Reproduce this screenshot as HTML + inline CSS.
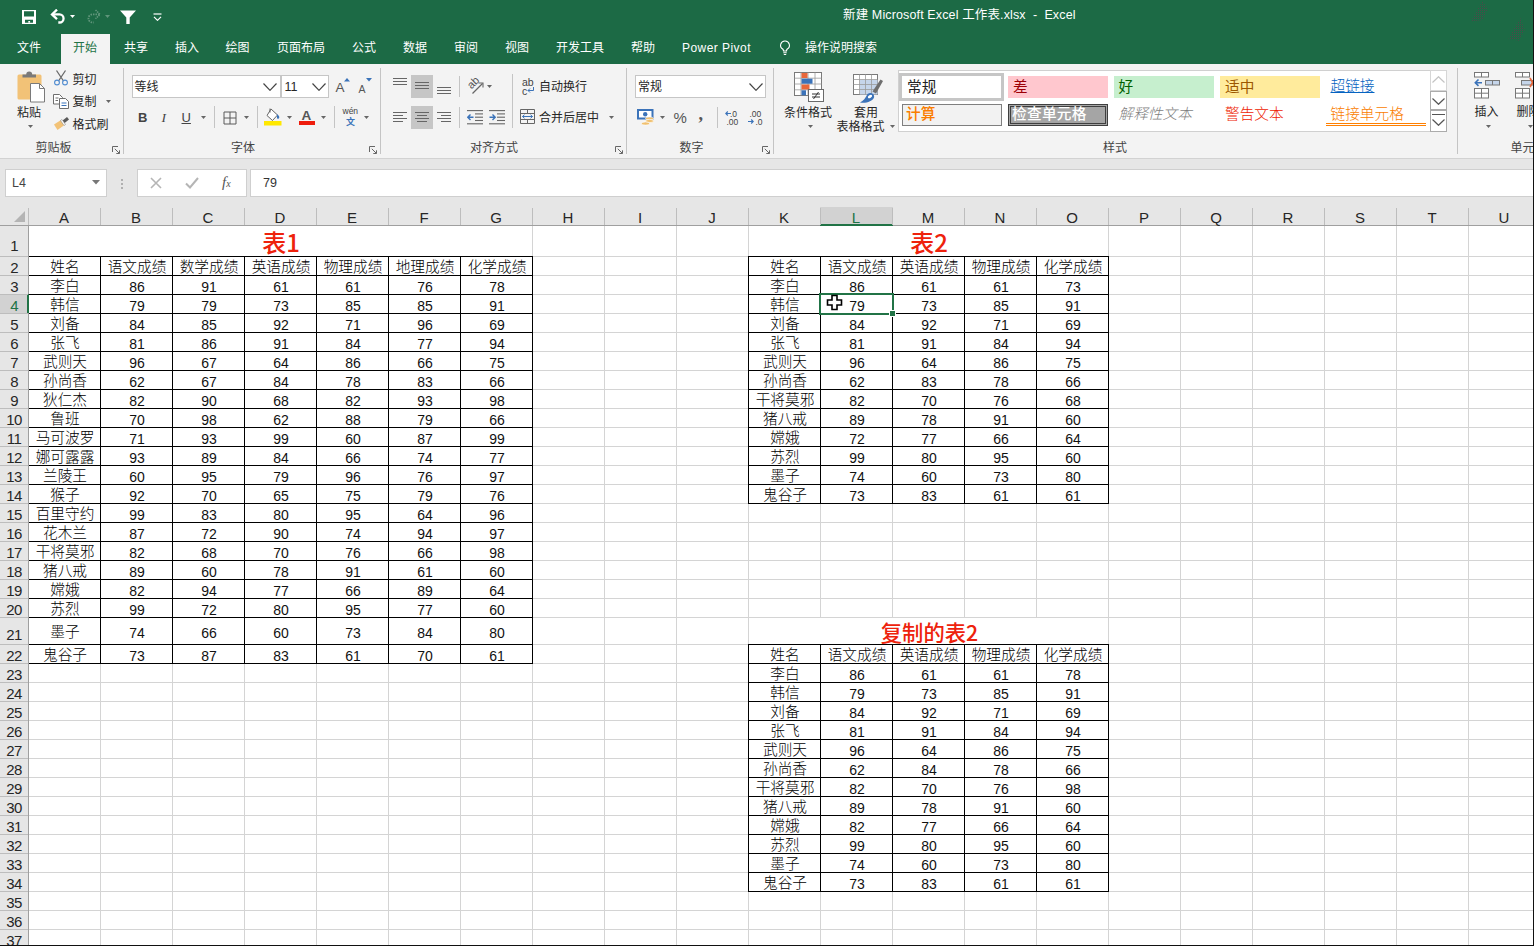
<!DOCTYPE html><html lang="zh-CN"><head><meta charset="utf-8"><title>Excel</title><style>
html,body{margin:0;padding:0;}
body{width:1534px;height:946px;overflow:hidden;background:#fff;position:relative;
 font-family:"Liberation Sans","Noto Sans CJK SC",sans-serif;color:#262626;}
div,span,svg{position:absolute;box-sizing:border-box;}
.t{white-space:nowrap;}
#top{left:0;top:0;width:1534px;height:64px;background:#1c6a45;}
#rib{left:0;top:64px;width:1534px;height:95px;background:#f3f3f3;border-bottom:1px solid #d2d2d2;}
#fb{left:0;top:159px;width:1534px;height:48px;background:#e6e6e6;}
#ch{left:0;top:207px;width:1534px;height:19px;background:#e6e6e6;border-bottom:1px solid #9f9f9f;}
#rh{left:0;top:226px;width:29px;height:720px;background:#e6e6e6;border-right:1px solid #9f9f9f;}
.tab{top:39px;height:18px;line-height:18px;font-size:12px;color:#fff;white-space:nowrap;}
.cl{top:210px;height:16px;line-height:16px;font-size:15px;text-align:center;width:72px;color:#262626;}
.rn{left:0;width:28px;text-align:center;font-size:15px;letter-spacing:-0.6px;color:#262626;height:16px;line-height:16px;}
.hl{left:28px;height:1px;background:#d4d4d4;width:1506px;}
.vl{top:226px;width:1px;background:#d4d4d4;height:720px;}
.bh{height:1px;background:#000;}
.bv{width:1px;background:#000;}
.c{width:72px;height:19px;line-height:19px;text-align:center;font-size:14.67px;white-space:nowrap;color:#000;font-weight:300;}
.n{font-size:15.4px;font-weight:400;transform:scaleX(0.91);color:#111;}
.ttl{color:#ee220c;font-weight:500;font-family:'Noto Sans CJK SC',sans-serif;text-align:center;white-space:nowrap;}
.gl{font-size:12px;color:#444;white-space:nowrap;height:16px;line-height:16px;}
.sep{width:1px;background:#c8c8c8;}
</style></head><body>
<div id="grid" style="left:0;top:0;width:1534px;height:946px">
<div class="vl" style="left:100px"></div>
<div class="vl" style="left:172px"></div>
<div class="vl" style="left:244px"></div>
<div class="vl" style="left:316px"></div>
<div class="vl" style="left:388px"></div>
<div class="vl" style="left:460px"></div>
<div class="vl" style="left:532px"></div>
<div class="vl" style="left:604px"></div>
<div class="vl" style="left:676px"></div>
<div class="vl" style="left:748px"></div>
<div class="vl" style="left:820px"></div>
<div class="vl" style="left:892px"></div>
<div class="vl" style="left:964px"></div>
<div class="vl" style="left:1036px"></div>
<div class="vl" style="left:1108px"></div>
<div class="vl" style="left:1180px"></div>
<div class="vl" style="left:1252px"></div>
<div class="vl" style="left:1324px"></div>
<div class="vl" style="left:1396px"></div>
<div class="vl" style="left:1468px"></div>
<div class="hl" style="top:256px"></div>
<div class="hl" style="top:275px"></div>
<div class="hl" style="top:294px"></div>
<div class="hl" style="top:313px"></div>
<div class="hl" style="top:332px"></div>
<div class="hl" style="top:351px"></div>
<div class="hl" style="top:370px"></div>
<div class="hl" style="top:389px"></div>
<div class="hl" style="top:408px"></div>
<div class="hl" style="top:427px"></div>
<div class="hl" style="top:446px"></div>
<div class="hl" style="top:465px"></div>
<div class="hl" style="top:484px"></div>
<div class="hl" style="top:503px"></div>
<div class="hl" style="top:522px"></div>
<div class="hl" style="top:541px"></div>
<div class="hl" style="top:560px"></div>
<div class="hl" style="top:579px"></div>
<div class="hl" style="top:598px"></div>
<div class="hl" style="top:617px"></div>
<div class="hl" style="top:644px"></div>
<div class="hl" style="top:663px"></div>
<div class="hl" style="top:682px"></div>
<div class="hl" style="top:701px"></div>
<div class="hl" style="top:720px"></div>
<div class="hl" style="top:739px"></div>
<div class="hl" style="top:758px"></div>
<div class="hl" style="top:777px"></div>
<div class="hl" style="top:796px"></div>
<div class="hl" style="top:815px"></div>
<div class="hl" style="top:834px"></div>
<div class="hl" style="top:853px"></div>
<div class="hl" style="top:872px"></div>
<div class="hl" style="top:891px"></div>
<div class="hl" style="top:910px"></div>
<div class="hl" style="top:929px"></div>
<div style="left:29px;top:226px;width:503px;height:30px;background:#fff"></div>
<div style="left:749px;top:226px;width:359px;height:30px;background:#fff"></div>
<div style="left:749px;top:618px;width:359px;height:26px;background:#fff"></div>
</div>
<div class="bh" style="left:28px;top:256px;width:505px"></div>
<div class="bh" style="left:28px;top:275px;width:505px"></div>
<div class="bh" style="left:28px;top:294px;width:505px"></div>
<div class="bh" style="left:28px;top:313px;width:505px"></div>
<div class="bh" style="left:28px;top:332px;width:505px"></div>
<div class="bh" style="left:28px;top:351px;width:505px"></div>
<div class="bh" style="left:28px;top:370px;width:505px"></div>
<div class="bh" style="left:28px;top:389px;width:505px"></div>
<div class="bh" style="left:28px;top:408px;width:505px"></div>
<div class="bh" style="left:28px;top:427px;width:505px"></div>
<div class="bh" style="left:28px;top:446px;width:505px"></div>
<div class="bh" style="left:28px;top:465px;width:505px"></div>
<div class="bh" style="left:28px;top:484px;width:505px"></div>
<div class="bh" style="left:28px;top:503px;width:505px"></div>
<div class="bh" style="left:28px;top:522px;width:505px"></div>
<div class="bh" style="left:28px;top:541px;width:505px"></div>
<div class="bh" style="left:28px;top:560px;width:505px"></div>
<div class="bh" style="left:28px;top:579px;width:505px"></div>
<div class="bh" style="left:28px;top:598px;width:505px"></div>
<div class="bh" style="left:28px;top:617px;width:505px"></div>
<div class="bh" style="left:28px;top:644px;width:505px"></div>
<div class="bh" style="left:28px;top:663px;width:505px"></div>
<div class="bv" style="left:28px;top:256px;height:408px"></div>
<div class="bv" style="left:100px;top:256px;height:408px"></div>
<div class="bv" style="left:172px;top:256px;height:408px"></div>
<div class="bv" style="left:244px;top:256px;height:408px"></div>
<div class="bv" style="left:316px;top:256px;height:408px"></div>
<div class="bv" style="left:388px;top:256px;height:408px"></div>
<div class="bv" style="left:460px;top:256px;height:408px"></div>
<div class="bv" style="left:532px;top:256px;height:408px"></div>
<div class="c" style="left:29px;top:258px">姓名</div>
<div class="c" style="left:101px;top:258px">语文成绩</div>
<div class="c" style="left:173px;top:258px">数学成绩</div>
<div class="c" style="left:245px;top:258px">英语成绩</div>
<div class="c" style="left:317px;top:258px">物理成绩</div>
<div class="c" style="left:389px;top:258px">地理成绩</div>
<div class="c" style="left:461px;top:258px">化学成绩</div>
<div class="c" style="left:29px;top:277px">李白</div>
<div class="c n" style="left:101px;top:277px">86</div>
<div class="c n" style="left:173px;top:277px">91</div>
<div class="c n" style="left:245px;top:277px">61</div>
<div class="c n" style="left:317px;top:277px">61</div>
<div class="c n" style="left:389px;top:277px">76</div>
<div class="c n" style="left:461px;top:277px">78</div>
<div class="c" style="left:29px;top:296px">韩信</div>
<div class="c n" style="left:101px;top:296px">79</div>
<div class="c n" style="left:173px;top:296px">79</div>
<div class="c n" style="left:245px;top:296px">73</div>
<div class="c n" style="left:317px;top:296px">85</div>
<div class="c n" style="left:389px;top:296px">85</div>
<div class="c n" style="left:461px;top:296px">91</div>
<div class="c" style="left:29px;top:315px">刘备</div>
<div class="c n" style="left:101px;top:315px">84</div>
<div class="c n" style="left:173px;top:315px">85</div>
<div class="c n" style="left:245px;top:315px">92</div>
<div class="c n" style="left:317px;top:315px">71</div>
<div class="c n" style="left:389px;top:315px">96</div>
<div class="c n" style="left:461px;top:315px">69</div>
<div class="c" style="left:29px;top:334px">张飞</div>
<div class="c n" style="left:101px;top:334px">81</div>
<div class="c n" style="left:173px;top:334px">86</div>
<div class="c n" style="left:245px;top:334px">91</div>
<div class="c n" style="left:317px;top:334px">84</div>
<div class="c n" style="left:389px;top:334px">77</div>
<div class="c n" style="left:461px;top:334px">94</div>
<div class="c" style="left:29px;top:353px">武则天</div>
<div class="c n" style="left:101px;top:353px">96</div>
<div class="c n" style="left:173px;top:353px">67</div>
<div class="c n" style="left:245px;top:353px">64</div>
<div class="c n" style="left:317px;top:353px">86</div>
<div class="c n" style="left:389px;top:353px">66</div>
<div class="c n" style="left:461px;top:353px">75</div>
<div class="c" style="left:29px;top:372px">孙尚香</div>
<div class="c n" style="left:101px;top:372px">62</div>
<div class="c n" style="left:173px;top:372px">67</div>
<div class="c n" style="left:245px;top:372px">84</div>
<div class="c n" style="left:317px;top:372px">78</div>
<div class="c n" style="left:389px;top:372px">83</div>
<div class="c n" style="left:461px;top:372px">66</div>
<div class="c" style="left:29px;top:391px">狄仁杰</div>
<div class="c n" style="left:101px;top:391px">82</div>
<div class="c n" style="left:173px;top:391px">90</div>
<div class="c n" style="left:245px;top:391px">68</div>
<div class="c n" style="left:317px;top:391px">82</div>
<div class="c n" style="left:389px;top:391px">93</div>
<div class="c n" style="left:461px;top:391px">98</div>
<div class="c" style="left:29px;top:410px">鲁班</div>
<div class="c n" style="left:101px;top:410px">70</div>
<div class="c n" style="left:173px;top:410px">98</div>
<div class="c n" style="left:245px;top:410px">62</div>
<div class="c n" style="left:317px;top:410px">88</div>
<div class="c n" style="left:389px;top:410px">79</div>
<div class="c n" style="left:461px;top:410px">66</div>
<div class="c" style="left:29px;top:429px">马可波罗</div>
<div class="c n" style="left:101px;top:429px">71</div>
<div class="c n" style="left:173px;top:429px">93</div>
<div class="c n" style="left:245px;top:429px">99</div>
<div class="c n" style="left:317px;top:429px">60</div>
<div class="c n" style="left:389px;top:429px">87</div>
<div class="c n" style="left:461px;top:429px">99</div>
<div class="c" style="left:29px;top:448px">娜可露露</div>
<div class="c n" style="left:101px;top:448px">93</div>
<div class="c n" style="left:173px;top:448px">89</div>
<div class="c n" style="left:245px;top:448px">84</div>
<div class="c n" style="left:317px;top:448px">66</div>
<div class="c n" style="left:389px;top:448px">74</div>
<div class="c n" style="left:461px;top:448px">77</div>
<div class="c" style="left:29px;top:467px">兰陵王</div>
<div class="c n" style="left:101px;top:467px">60</div>
<div class="c n" style="left:173px;top:467px">95</div>
<div class="c n" style="left:245px;top:467px">79</div>
<div class="c n" style="left:317px;top:467px">96</div>
<div class="c n" style="left:389px;top:467px">76</div>
<div class="c n" style="left:461px;top:467px">97</div>
<div class="c" style="left:29px;top:486px">猴子</div>
<div class="c n" style="left:101px;top:486px">92</div>
<div class="c n" style="left:173px;top:486px">70</div>
<div class="c n" style="left:245px;top:486px">65</div>
<div class="c n" style="left:317px;top:486px">75</div>
<div class="c n" style="left:389px;top:486px">79</div>
<div class="c n" style="left:461px;top:486px">76</div>
<div class="c" style="left:29px;top:505px">百里守约</div>
<div class="c n" style="left:101px;top:505px">99</div>
<div class="c n" style="left:173px;top:505px">83</div>
<div class="c n" style="left:245px;top:505px">80</div>
<div class="c n" style="left:317px;top:505px">95</div>
<div class="c n" style="left:389px;top:505px">64</div>
<div class="c n" style="left:461px;top:505px">96</div>
<div class="c" style="left:29px;top:524px">花木兰</div>
<div class="c n" style="left:101px;top:524px">87</div>
<div class="c n" style="left:173px;top:524px">72</div>
<div class="c n" style="left:245px;top:524px">90</div>
<div class="c n" style="left:317px;top:524px">74</div>
<div class="c n" style="left:389px;top:524px">94</div>
<div class="c n" style="left:461px;top:524px">97</div>
<div class="c" style="left:29px;top:543px">干将莫邪</div>
<div class="c n" style="left:101px;top:543px">82</div>
<div class="c n" style="left:173px;top:543px">68</div>
<div class="c n" style="left:245px;top:543px">70</div>
<div class="c n" style="left:317px;top:543px">76</div>
<div class="c n" style="left:389px;top:543px">66</div>
<div class="c n" style="left:461px;top:543px">98</div>
<div class="c" style="left:29px;top:562px">猪八戒</div>
<div class="c n" style="left:101px;top:562px">89</div>
<div class="c n" style="left:173px;top:562px">60</div>
<div class="c n" style="left:245px;top:562px">78</div>
<div class="c n" style="left:317px;top:562px">91</div>
<div class="c n" style="left:389px;top:562px">61</div>
<div class="c n" style="left:461px;top:562px">60</div>
<div class="c" style="left:29px;top:581px">嫦娥</div>
<div class="c n" style="left:101px;top:581px">82</div>
<div class="c n" style="left:173px;top:581px">94</div>
<div class="c n" style="left:245px;top:581px">77</div>
<div class="c n" style="left:317px;top:581px">66</div>
<div class="c n" style="left:389px;top:581px">89</div>
<div class="c n" style="left:461px;top:581px">64</div>
<div class="c" style="left:29px;top:600px">苏烈</div>
<div class="c n" style="left:101px;top:600px">99</div>
<div class="c n" style="left:173px;top:600px">72</div>
<div class="c n" style="left:245px;top:600px">80</div>
<div class="c n" style="left:317px;top:600px">95</div>
<div class="c n" style="left:389px;top:600px">77</div>
<div class="c n" style="left:461px;top:600px">60</div>
<div class="c" style="left:29px;top:623px">墨子</div>
<div class="c n" style="left:101px;top:623px">74</div>
<div class="c n" style="left:173px;top:623px">66</div>
<div class="c n" style="left:245px;top:623px">60</div>
<div class="c n" style="left:317px;top:623px">73</div>
<div class="c n" style="left:389px;top:623px">84</div>
<div class="c n" style="left:461px;top:623px">80</div>
<div class="c" style="left:29px;top:646px">鬼谷子</div>
<div class="c n" style="left:101px;top:646px">73</div>
<div class="c n" style="left:173px;top:646px">87</div>
<div class="c n" style="left:245px;top:646px">83</div>
<div class="c n" style="left:317px;top:646px">61</div>
<div class="c n" style="left:389px;top:646px">70</div>
<div class="c n" style="left:461px;top:646px">61</div>
<div class="bh" style="left:748px;top:256px;width:361px"></div>
<div class="bh" style="left:748px;top:275px;width:361px"></div>
<div class="bh" style="left:748px;top:294px;width:361px"></div>
<div class="bh" style="left:748px;top:313px;width:361px"></div>
<div class="bh" style="left:748px;top:332px;width:361px"></div>
<div class="bh" style="left:748px;top:351px;width:361px"></div>
<div class="bh" style="left:748px;top:370px;width:361px"></div>
<div class="bh" style="left:748px;top:389px;width:361px"></div>
<div class="bh" style="left:748px;top:408px;width:361px"></div>
<div class="bh" style="left:748px;top:427px;width:361px"></div>
<div class="bh" style="left:748px;top:446px;width:361px"></div>
<div class="bh" style="left:748px;top:465px;width:361px"></div>
<div class="bh" style="left:748px;top:484px;width:361px"></div>
<div class="bh" style="left:748px;top:503px;width:361px"></div>
<div class="bv" style="left:748px;top:256px;height:248px"></div>
<div class="bv" style="left:820px;top:256px;height:248px"></div>
<div class="bv" style="left:892px;top:256px;height:248px"></div>
<div class="bv" style="left:964px;top:256px;height:248px"></div>
<div class="bv" style="left:1036px;top:256px;height:248px"></div>
<div class="bv" style="left:1108px;top:256px;height:248px"></div>
<div class="c" style="left:749px;top:258px">姓名</div>
<div class="c" style="left:821px;top:258px">语文成绩</div>
<div class="c" style="left:893px;top:258px">英语成绩</div>
<div class="c" style="left:965px;top:258px">物理成绩</div>
<div class="c" style="left:1037px;top:258px">化学成绩</div>
<div class="c" style="left:749px;top:277px">李白</div>
<div class="c n" style="left:821px;top:277px">86</div>
<div class="c n" style="left:893px;top:277px">61</div>
<div class="c n" style="left:965px;top:277px">61</div>
<div class="c n" style="left:1037px;top:277px">73</div>
<div class="c" style="left:749px;top:296px">韩信</div>
<div class="c n" style="left:821px;top:296px">79</div>
<div class="c n" style="left:893px;top:296px">73</div>
<div class="c n" style="left:965px;top:296px">85</div>
<div class="c n" style="left:1037px;top:296px">91</div>
<div class="c" style="left:749px;top:315px">刘备</div>
<div class="c n" style="left:821px;top:315px">84</div>
<div class="c n" style="left:893px;top:315px">92</div>
<div class="c n" style="left:965px;top:315px">71</div>
<div class="c n" style="left:1037px;top:315px">69</div>
<div class="c" style="left:749px;top:334px">张飞</div>
<div class="c n" style="left:821px;top:334px">81</div>
<div class="c n" style="left:893px;top:334px">91</div>
<div class="c n" style="left:965px;top:334px">84</div>
<div class="c n" style="left:1037px;top:334px">94</div>
<div class="c" style="left:749px;top:353px">武则天</div>
<div class="c n" style="left:821px;top:353px">96</div>
<div class="c n" style="left:893px;top:353px">64</div>
<div class="c n" style="left:965px;top:353px">86</div>
<div class="c n" style="left:1037px;top:353px">75</div>
<div class="c" style="left:749px;top:372px">孙尚香</div>
<div class="c n" style="left:821px;top:372px">62</div>
<div class="c n" style="left:893px;top:372px">83</div>
<div class="c n" style="left:965px;top:372px">78</div>
<div class="c n" style="left:1037px;top:372px">66</div>
<div class="c" style="left:749px;top:391px">干将莫邪</div>
<div class="c n" style="left:821px;top:391px">82</div>
<div class="c n" style="left:893px;top:391px">70</div>
<div class="c n" style="left:965px;top:391px">76</div>
<div class="c n" style="left:1037px;top:391px">68</div>
<div class="c" style="left:749px;top:410px">猪八戒</div>
<div class="c n" style="left:821px;top:410px">89</div>
<div class="c n" style="left:893px;top:410px">78</div>
<div class="c n" style="left:965px;top:410px">91</div>
<div class="c n" style="left:1037px;top:410px">60</div>
<div class="c" style="left:749px;top:429px">嫦娥</div>
<div class="c n" style="left:821px;top:429px">72</div>
<div class="c n" style="left:893px;top:429px">77</div>
<div class="c n" style="left:965px;top:429px">66</div>
<div class="c n" style="left:1037px;top:429px">64</div>
<div class="c" style="left:749px;top:448px">苏烈</div>
<div class="c n" style="left:821px;top:448px">99</div>
<div class="c n" style="left:893px;top:448px">80</div>
<div class="c n" style="left:965px;top:448px">95</div>
<div class="c n" style="left:1037px;top:448px">60</div>
<div class="c" style="left:749px;top:467px">墨子</div>
<div class="c n" style="left:821px;top:467px">74</div>
<div class="c n" style="left:893px;top:467px">60</div>
<div class="c n" style="left:965px;top:467px">73</div>
<div class="c n" style="left:1037px;top:467px">80</div>
<div class="c" style="left:749px;top:486px">鬼谷子</div>
<div class="c n" style="left:821px;top:486px">73</div>
<div class="c n" style="left:893px;top:486px">83</div>
<div class="c n" style="left:965px;top:486px">61</div>
<div class="c n" style="left:1037px;top:486px">61</div>
<div class="bh" style="left:748px;top:644px;width:361px"></div>
<div class="bh" style="left:748px;top:663px;width:361px"></div>
<div class="bh" style="left:748px;top:682px;width:361px"></div>
<div class="bh" style="left:748px;top:701px;width:361px"></div>
<div class="bh" style="left:748px;top:720px;width:361px"></div>
<div class="bh" style="left:748px;top:739px;width:361px"></div>
<div class="bh" style="left:748px;top:758px;width:361px"></div>
<div class="bh" style="left:748px;top:777px;width:361px"></div>
<div class="bh" style="left:748px;top:796px;width:361px"></div>
<div class="bh" style="left:748px;top:815px;width:361px"></div>
<div class="bh" style="left:748px;top:834px;width:361px"></div>
<div class="bh" style="left:748px;top:853px;width:361px"></div>
<div class="bh" style="left:748px;top:872px;width:361px"></div>
<div class="bh" style="left:748px;top:891px;width:361px"></div>
<div class="bv" style="left:748px;top:644px;height:248px"></div>
<div class="bv" style="left:820px;top:644px;height:248px"></div>
<div class="bv" style="left:892px;top:644px;height:248px"></div>
<div class="bv" style="left:964px;top:644px;height:248px"></div>
<div class="bv" style="left:1036px;top:644px;height:248px"></div>
<div class="bv" style="left:1108px;top:644px;height:248px"></div>
<div class="c" style="left:749px;top:646px">姓名</div>
<div class="c" style="left:821px;top:646px">语文成绩</div>
<div class="c" style="left:893px;top:646px">英语成绩</div>
<div class="c" style="left:965px;top:646px">物理成绩</div>
<div class="c" style="left:1037px;top:646px">化学成绩</div>
<div class="c" style="left:749px;top:665px">李白</div>
<div class="c n" style="left:821px;top:665px">86</div>
<div class="c n" style="left:893px;top:665px">61</div>
<div class="c n" style="left:965px;top:665px">61</div>
<div class="c n" style="left:1037px;top:665px">78</div>
<div class="c" style="left:749px;top:684px">韩信</div>
<div class="c n" style="left:821px;top:684px">79</div>
<div class="c n" style="left:893px;top:684px">73</div>
<div class="c n" style="left:965px;top:684px">85</div>
<div class="c n" style="left:1037px;top:684px">91</div>
<div class="c" style="left:749px;top:703px">刘备</div>
<div class="c n" style="left:821px;top:703px">84</div>
<div class="c n" style="left:893px;top:703px">92</div>
<div class="c n" style="left:965px;top:703px">71</div>
<div class="c n" style="left:1037px;top:703px">69</div>
<div class="c" style="left:749px;top:722px">张飞</div>
<div class="c n" style="left:821px;top:722px">81</div>
<div class="c n" style="left:893px;top:722px">91</div>
<div class="c n" style="left:965px;top:722px">84</div>
<div class="c n" style="left:1037px;top:722px">94</div>
<div class="c" style="left:749px;top:741px">武则天</div>
<div class="c n" style="left:821px;top:741px">96</div>
<div class="c n" style="left:893px;top:741px">64</div>
<div class="c n" style="left:965px;top:741px">86</div>
<div class="c n" style="left:1037px;top:741px">75</div>
<div class="c" style="left:749px;top:760px">孙尚香</div>
<div class="c n" style="left:821px;top:760px">62</div>
<div class="c n" style="left:893px;top:760px">84</div>
<div class="c n" style="left:965px;top:760px">78</div>
<div class="c n" style="left:1037px;top:760px">66</div>
<div class="c" style="left:749px;top:779px">干将莫邪</div>
<div class="c n" style="left:821px;top:779px">82</div>
<div class="c n" style="left:893px;top:779px">70</div>
<div class="c n" style="left:965px;top:779px">76</div>
<div class="c n" style="left:1037px;top:779px">98</div>
<div class="c" style="left:749px;top:798px">猪八戒</div>
<div class="c n" style="left:821px;top:798px">89</div>
<div class="c n" style="left:893px;top:798px">78</div>
<div class="c n" style="left:965px;top:798px">91</div>
<div class="c n" style="left:1037px;top:798px">60</div>
<div class="c" style="left:749px;top:817px">嫦娥</div>
<div class="c n" style="left:821px;top:817px">82</div>
<div class="c n" style="left:893px;top:817px">77</div>
<div class="c n" style="left:965px;top:817px">66</div>
<div class="c n" style="left:1037px;top:817px">64</div>
<div class="c" style="left:749px;top:836px">苏烈</div>
<div class="c n" style="left:821px;top:836px">99</div>
<div class="c n" style="left:893px;top:836px">80</div>
<div class="c n" style="left:965px;top:836px">95</div>
<div class="c n" style="left:1037px;top:836px">60</div>
<div class="c" style="left:749px;top:855px">墨子</div>
<div class="c n" style="left:821px;top:855px">74</div>
<div class="c n" style="left:893px;top:855px">60</div>
<div class="c n" style="left:965px;top:855px">73</div>
<div class="c n" style="left:1037px;top:855px">80</div>
<div class="c" style="left:749px;top:874px">鬼谷子</div>
<div class="c n" style="left:821px;top:874px">73</div>
<div class="c n" style="left:893px;top:874px">83</div>
<div class="c n" style="left:965px;top:874px">61</div>
<div class="c n" style="left:1037px;top:874px">61</div>
<div class="ttl" style="left:28px;top:226px;width:504px;height:30px;line-height:32px;font-size:24px;padding-left:2px">表1</div>
<div class="ttl" style="left:748px;top:226px;width:360px;height:30px;line-height:32px;font-size:24px;padding-left:2px">表2</div>
<div class="ttl" style="left:748px;top:618px;width:360px;height:26px;line-height:28px;font-size:21.33px;padding-left:3px">复制的表2</div>
<div style="left:819px;top:293px;width:75px;height:22px;border:2px solid #217346"></div>
<div style="left:889px;top:310px;width:7px;height:7px;background:#fff"></div>
<div style="left:890px;top:311px;width:5px;height:5px;background:#217346"></div>
<svg style="left:826px;top:294px" width="17" height="17" viewBox="0 0 17 17"><path d="M6 1.5h5v4.5h4.5v5H11v4.5H6V11H1.5V6H6z" fill="#fff" stroke="#000" stroke-width="1.6"/></svg>
<div id="ch">
</div>
<div style="left:820px;top:207px;width:73px;height:19px;background:#d2d2d2;border-bottom:2px solid #217346"></div>
<div style="left:28px;top:208px;width:1px;height:17px;background:#bdbdbd"></div>
<div class="cl" style="left:28px;color:#262626">A</div>
<div style="left:100px;top:208px;width:1px;height:17px;background:#bdbdbd"></div>
<div class="cl" style="left:100px;color:#262626">B</div>
<div style="left:172px;top:208px;width:1px;height:17px;background:#bdbdbd"></div>
<div class="cl" style="left:172px;color:#262626">C</div>
<div style="left:244px;top:208px;width:1px;height:17px;background:#bdbdbd"></div>
<div class="cl" style="left:244px;color:#262626">D</div>
<div style="left:316px;top:208px;width:1px;height:17px;background:#bdbdbd"></div>
<div class="cl" style="left:316px;color:#262626">E</div>
<div style="left:388px;top:208px;width:1px;height:17px;background:#bdbdbd"></div>
<div class="cl" style="left:388px;color:#262626">F</div>
<div style="left:460px;top:208px;width:1px;height:17px;background:#bdbdbd"></div>
<div class="cl" style="left:460px;color:#262626">G</div>
<div style="left:532px;top:208px;width:1px;height:17px;background:#bdbdbd"></div>
<div class="cl" style="left:532px;color:#262626">H</div>
<div style="left:604px;top:208px;width:1px;height:17px;background:#bdbdbd"></div>
<div class="cl" style="left:604px;color:#262626">I</div>
<div style="left:676px;top:208px;width:1px;height:17px;background:#bdbdbd"></div>
<div class="cl" style="left:676px;color:#262626">J</div>
<div style="left:748px;top:208px;width:1px;height:17px;background:#bdbdbd"></div>
<div class="cl" style="left:748px;color:#262626">K</div>
<div style="left:820px;top:208px;width:1px;height:17px;background:#bdbdbd"></div>
<div class="cl" style="left:820px;color:#217346">L</div>
<div style="left:892px;top:208px;width:1px;height:17px;background:#bdbdbd"></div>
<div class="cl" style="left:892px;color:#262626">M</div>
<div style="left:964px;top:208px;width:1px;height:17px;background:#bdbdbd"></div>
<div class="cl" style="left:964px;color:#262626">N</div>
<div style="left:1036px;top:208px;width:1px;height:17px;background:#bdbdbd"></div>
<div class="cl" style="left:1036px;color:#262626">O</div>
<div style="left:1108px;top:208px;width:1px;height:17px;background:#bdbdbd"></div>
<div class="cl" style="left:1108px;color:#262626">P</div>
<div style="left:1180px;top:208px;width:1px;height:17px;background:#bdbdbd"></div>
<div class="cl" style="left:1180px;color:#262626">Q</div>
<div style="left:1252px;top:208px;width:1px;height:17px;background:#bdbdbd"></div>
<div class="cl" style="left:1252px;color:#262626">R</div>
<div style="left:1324px;top:208px;width:1px;height:17px;background:#bdbdbd"></div>
<div class="cl" style="left:1324px;color:#262626">S</div>
<div style="left:1396px;top:208px;width:1px;height:17px;background:#bdbdbd"></div>
<div class="cl" style="left:1396px;color:#262626">T</div>
<div style="left:1468px;top:208px;width:1px;height:17px;background:#bdbdbd"></div>
<div class="cl" style="left:1468px;color:#262626">U</div>
<div id="rh"></div>
<div style="left:0;top:294px;width:29px;height:19px;background:#d2d2d2;border-right:2px solid #217346"></div>
<div style="left:0;top:256px;width:28px;height:1px;background:#bdbdbd"></div>
<div class="rn" style="top:238px;color:#262626">1</div>
<div style="left:0;top:275px;width:28px;height:1px;background:#bdbdbd"></div>
<div class="rn" style="top:260px;color:#262626">2</div>
<div style="left:0;top:294px;width:28px;height:1px;background:#bdbdbd"></div>
<div class="rn" style="top:279px;color:#262626">3</div>
<div style="left:0;top:313px;width:28px;height:1px;background:#bdbdbd"></div>
<div class="rn" style="top:298px;color:#217346">4</div>
<div style="left:0;top:332px;width:28px;height:1px;background:#bdbdbd"></div>
<div class="rn" style="top:317px;color:#262626">5</div>
<div style="left:0;top:351px;width:28px;height:1px;background:#bdbdbd"></div>
<div class="rn" style="top:336px;color:#262626">6</div>
<div style="left:0;top:370px;width:28px;height:1px;background:#bdbdbd"></div>
<div class="rn" style="top:355px;color:#262626">7</div>
<div style="left:0;top:389px;width:28px;height:1px;background:#bdbdbd"></div>
<div class="rn" style="top:374px;color:#262626">8</div>
<div style="left:0;top:408px;width:28px;height:1px;background:#bdbdbd"></div>
<div class="rn" style="top:393px;color:#262626">9</div>
<div style="left:0;top:427px;width:28px;height:1px;background:#bdbdbd"></div>
<div class="rn" style="top:412px;color:#262626">10</div>
<div style="left:0;top:446px;width:28px;height:1px;background:#bdbdbd"></div>
<div class="rn" style="top:431px;color:#262626">11</div>
<div style="left:0;top:465px;width:28px;height:1px;background:#bdbdbd"></div>
<div class="rn" style="top:450px;color:#262626">12</div>
<div style="left:0;top:484px;width:28px;height:1px;background:#bdbdbd"></div>
<div class="rn" style="top:469px;color:#262626">13</div>
<div style="left:0;top:503px;width:28px;height:1px;background:#bdbdbd"></div>
<div class="rn" style="top:488px;color:#262626">14</div>
<div style="left:0;top:522px;width:28px;height:1px;background:#bdbdbd"></div>
<div class="rn" style="top:507px;color:#262626">15</div>
<div style="left:0;top:541px;width:28px;height:1px;background:#bdbdbd"></div>
<div class="rn" style="top:526px;color:#262626">16</div>
<div style="left:0;top:560px;width:28px;height:1px;background:#bdbdbd"></div>
<div class="rn" style="top:545px;color:#262626">17</div>
<div style="left:0;top:579px;width:28px;height:1px;background:#bdbdbd"></div>
<div class="rn" style="top:564px;color:#262626">18</div>
<div style="left:0;top:598px;width:28px;height:1px;background:#bdbdbd"></div>
<div class="rn" style="top:583px;color:#262626">19</div>
<div style="left:0;top:617px;width:28px;height:1px;background:#bdbdbd"></div>
<div class="rn" style="top:602px;color:#262626">20</div>
<div style="left:0;top:644px;width:28px;height:1px;background:#bdbdbd"></div>
<div class="rn" style="top:627px;color:#262626">21</div>
<div style="left:0;top:663px;width:28px;height:1px;background:#bdbdbd"></div>
<div class="rn" style="top:648px;color:#262626">22</div>
<div style="left:0;top:682px;width:28px;height:1px;background:#bdbdbd"></div>
<div class="rn" style="top:667px;color:#262626">23</div>
<div style="left:0;top:701px;width:28px;height:1px;background:#bdbdbd"></div>
<div class="rn" style="top:686px;color:#262626">24</div>
<div style="left:0;top:720px;width:28px;height:1px;background:#bdbdbd"></div>
<div class="rn" style="top:705px;color:#262626">25</div>
<div style="left:0;top:739px;width:28px;height:1px;background:#bdbdbd"></div>
<div class="rn" style="top:724px;color:#262626">26</div>
<div style="left:0;top:758px;width:28px;height:1px;background:#bdbdbd"></div>
<div class="rn" style="top:743px;color:#262626">27</div>
<div style="left:0;top:777px;width:28px;height:1px;background:#bdbdbd"></div>
<div class="rn" style="top:762px;color:#262626">28</div>
<div style="left:0;top:796px;width:28px;height:1px;background:#bdbdbd"></div>
<div class="rn" style="top:781px;color:#262626">29</div>
<div style="left:0;top:815px;width:28px;height:1px;background:#bdbdbd"></div>
<div class="rn" style="top:800px;color:#262626">30</div>
<div style="left:0;top:834px;width:28px;height:1px;background:#bdbdbd"></div>
<div class="rn" style="top:819px;color:#262626">31</div>
<div style="left:0;top:853px;width:28px;height:1px;background:#bdbdbd"></div>
<div class="rn" style="top:838px;color:#262626">32</div>
<div style="left:0;top:872px;width:28px;height:1px;background:#bdbdbd"></div>
<div class="rn" style="top:857px;color:#262626">33</div>
<div style="left:0;top:891px;width:28px;height:1px;background:#bdbdbd"></div>
<div class="rn" style="top:876px;color:#262626">34</div>
<div style="left:0;top:910px;width:28px;height:1px;background:#bdbdbd"></div>
<div class="rn" style="top:895px;color:#262626">35</div>
<div style="left:0;top:929px;width:28px;height:1px;background:#bdbdbd"></div>
<div class="rn" style="top:914px;color:#262626">36</div>
<div style="left:0;top:948px;width:28px;height:1px;background:#bdbdbd"></div>
<div class="rn" style="top:933px;color:#262626">37</div>
<svg style="left:14px;top:211px" width="11" height="11" viewBox="0 0 11 11"><path d="M11 0V11H0z" fill="#b4b4b4"/></svg>
<div id="fb">
<div style="left:5px;top:10px;width:102px;height:28px;background:#fff;border:1px solid #cfcfcf"></div>
<div class="t" style="left:12px;top:16px;font-size:12.5px;line-height:16px;color:#444">L4</div>
<svg style="left:92px;top:21px" width="8" height="5" viewBox="0 0 8 5"><path d="M0 0h8L4 4.5z" fill="#777"/></svg>
<div style="left:121px;top:20px;width:2px;height:2px;background:#b0b0b0"></div>
<div style="left:121px;top:24px;width:2px;height:2px;background:#b0b0b0"></div>
<div style="left:121px;top:28px;width:2px;height:2px;background:#b0b0b0"></div>
<div style="left:137px;top:10px;width:110px;height:28px;background:#fff;border:1px solid #cfcfcf"></div>
<svg style="left:150px;top:18px" width="12" height="12" viewBox="0 0 12 12"><path d="M1 1l10 10M11 1L1 11" stroke="#b5b5b5" stroke-width="1.6" fill="none"/></svg>
<svg style="left:185px;top:18px" width="14" height="12" viewBox="0 0 14 12"><path d="M1 6.5l4 4L13 1" stroke="#b5b5b5" stroke-width="2" fill="none"/></svg>
<div class="t" style="left:222px;top:14px;font-size:15px;line-height:18px;color:#555;font-family:'Liberation Serif',serif;font-style:italic">f<span style="position:static;font-size:10px">x</span></div>
<div style="left:250px;top:10px;width:1290px;height:28px;background:#fff;border:1px solid #cfcfcf"></div>
<div class="t" style="left:263px;top:16px;font-size:12.5px;line-height:16px;color:#333">79</div>
</div>
<div id="top"></div>
<div id="rib"></div>
<svg style="left:22px;top:10px" width="14" height="14" viewBox="0 0 14 14"><path d="M0 0h14v14H0z" fill="#fff"/><path d="M2 1.300h10v5.300H2zM3 9.700h8v3H3z" fill="#1c6a45"/><path d="M6.300 11h1.800v1.700H6.300z" fill="#fff"/></svg>
<svg style="left:50px;top:8.5px" width="16" height="16" viewBox="0 0 16 16"><path d="M2.500 5.400h7a4.050 4.050 0 0 1 0 8.100H8.300" fill="none" stroke="#fff" stroke-width="2.300"/><path d="M7 0.600L2 5.400L7 10.200" fill="none" stroke="#fff" stroke-width="2.300"/></svg>
<svg style="left:70px;top:15px" width="5" height="3" viewBox="0 0 5 3"><path d="M0 0h5L2.5 3z" fill="#fff"/></svg>
<svg style="left:86px;top:8.5px" width="16" height="16" viewBox="0 0 16 16"><path d="M13.500 5.400H6.500a4.050 4.050 0 0 0 0 8.100H7.700" fill="none" stroke="#5f957a" stroke-width="1.800" stroke-dasharray="1.500 1"/><path d="M9.500 1L14 5.400L9.500 9.800" fill="none" stroke="#5f957a" stroke-width="1.600" stroke-dasharray="1.500 0.800"/></svg>
<svg style="left:105px;top:15px" width="5" height="3" viewBox="0 0 5 3"><path d="M0 0h5L2.5 3z" fill="#5f957a"/></svg>
<svg style="left:120px;top:9.5px" width="16" height="15" viewBox="0 0 16 15"><path d="M0 0.5h16L9.7 7.5V14H6.3V7.5z" fill="#fff"/></svg>
<svg style="left:152.5px;top:12.5px" width="9" height="8" viewBox="0 0 9 8"><path d="M0.5 1h8" stroke="#fff" stroke-width="1.200"/><path d="M1 3.800l3.500 3.500 3.500-3.500" fill="none" stroke="#fff" stroke-width="1.200"/></svg>
<div class="t" style="left:843px;top:7px;font-size:12.5px;line-height:16px;height:16px;color:#fff;letter-spacing:0.13px;">新建 Microsoft Excel 工作表.xlsx&nbsp; -&nbsp; Excel</div>
<svg style="left:1466px;top:0px" width="68" height="44" viewBox="0 0 68 44"><defs><pattern id="dp" width="2" height="2" patternUnits="userSpaceOnUse"><rect x="0" y="0" width="1" height="1" fill="#4a4a4a"/></pattern></defs><path d="M16.200 1l5.600 7.500-5 11.500-12 1.500z" fill="url(#dp)"/><path d="M54.400 18l4.500 11.800-6 11-10.500-2.200z" fill="url(#dp)"/></svg>
<div style="left:61px;top:34px;width:49px;height:30px;background:#f3f3f3"></div>
<div class="t" style="left:17px;top:40px;font-size:12px;line-height:16px;height:16px;color:#fff;">文件</div>
<div class="t" style="left:73px;top:40px;font-size:12px;line-height:16px;height:16px;color:#217346;">开始</div>
<div class="t" style="left:124px;top:40px;font-size:12px;line-height:16px;height:16px;color:#fff;">共享</div>
<div class="t" style="left:175px;top:40px;font-size:12px;line-height:16px;height:16px;color:#fff;">插入</div>
<div class="t" style="left:225.5px;top:40px;font-size:12px;line-height:16px;height:16px;color:#fff;">绘图</div>
<div class="t" style="left:277px;top:40px;font-size:12px;line-height:16px;height:16px;color:#fff;">页面布局</div>
<div class="t" style="left:352px;top:40px;font-size:12px;line-height:16px;height:16px;color:#fff;">公式</div>
<div class="t" style="left:403px;top:40px;font-size:12px;line-height:16px;height:16px;color:#fff;">数据</div>
<div class="t" style="left:454px;top:40px;font-size:12px;line-height:16px;height:16px;color:#fff;">审阅</div>
<div class="t" style="left:505px;top:40px;font-size:12px;line-height:16px;height:16px;color:#fff;">视图</div>
<div class="t" style="left:556px;top:40px;font-size:12px;line-height:16px;height:16px;color:#fff;">开发工具</div>
<div class="t" style="left:631px;top:40px;font-size:12px;line-height:16px;height:16px;color:#fff;">帮助</div>
<div class="t" style="left:682px;top:40px;font-size:12px;line-height:16px;height:16px;color:#fff;letter-spacing:0.45px;">Power Pivot</div>
<div class="t" style="left:805px;top:40px;font-size:12px;line-height:16px;height:16px;color:#fff;">操作说明搜索</div>
<svg style="left:779px;top:40px" width="12" height="16" viewBox="0 0 12 16"><path d="M6 1a4.3 4.3 0 0 0-2.3 8c.5.5.8 1.2.8 2h3c0-.8.3-1.5.8-2A4.3 4.3 0 0 0 6 1z" fill="none" stroke="#fff" stroke-width="1.1"/><path d="M4.3 12.7h3.4M4.8 14.5h2.4" stroke="#fff" stroke-width="1.1"/></svg>
<svg style="left:17px;top:71px" width="29" height="32" viewBox="0 0 29 32"><rect x="0.5" y="3.500" width="24" height="25" rx="1.500" fill="#f2c277"/><path d="M5.500 6.500V3.500h3.700a3 3 0 0 1 6 0H19v3z" fill="#7a7a7a"/><path d="M13.5 12.5h9l5 5V31h-14z" fill="#fff" stroke="#7a7a7a" stroke-width="1"/><path d="M22.5 12.5v5h5" fill="none" stroke="#7a7a7a" stroke-width="1"/></svg>
<div class="t" style="left:17px;top:104.5px;font-size:12px;line-height:16px;height:16px;color:#262626;">粘贴</div>
<svg style="left:28px;top:125px" width="5" height="3" viewBox="0 0 5 3"><path d="M0 0h5L2.5 3z" fill="#666"/></svg>
<svg style="left:53px;top:70px" width="16" height="16" viewBox="0 0 16 16"><path d="M3.500 0.500L10.500 11M12.500 0.500L5.500 11" stroke="#6a6a6a" stroke-width="1.300" fill="none"/><circle cx="4" cy="12.500" r="2.400" fill="none" stroke="#4f8bd0" stroke-width="1.100"/><circle cx="12" cy="12.500" r="2.400" fill="none" stroke="#4f8bd0" stroke-width="1.100"/></svg>
<div class="t" style="left:72.5px;top:71.5px;font-size:12px;line-height:16px;height:16px;color:#262626;">剪切</div>
<svg style="left:53px;top:94px" width="16" height="15" viewBox="0 0 16 15"><path d="M0.5 0.5h6l3 3V10h-9z" fill="#fff" stroke="#6e6e6e" stroke-width="1"/><path d="M6.5 4.5h6l3 3V14.5h-9z" fill="#fff" stroke="#6e6e6e" stroke-width="1"/><path d="M8.5 9h5M8.5 11.5h5" stroke="#3b73b9" stroke-width="1"/><path d="M2.5 4h3M2.5 6.5h2.5" stroke="#6e6e6e" stroke-width="1"/></svg>
<div class="t" style="left:72.5px;top:94px;font-size:12px;line-height:16px;height:16px;color:#262626;">复制</div>
<svg style="left:106px;top:100px" width="5" height="3" viewBox="0 0 5 3"><path d="M0 0h5L2.5 3z" fill="#666"/></svg>
<svg style="left:53px;top:116px" width="17" height="15" viewBox="0 0 17 15"><path d="M9 5l5-4 2 2.5-5 4z" fill="#5a5a5a"/><path d="M1 8.5l7-4.5 3.5 5-7 5z" fill="#f2c277"/><path d="M7.5 4.5l1.5-1 3.5 5-1.5 1z" fill="#fff" stroke="#8a8a8a" stroke-width=".6"/></svg>
<div class="t" style="left:72.5px;top:117px;font-size:12px;line-height:16px;height:16px;color:#262626;">格式刷</div>
<div class="t" style="left:35.5px;top:140px;font-size:12px;line-height:16px;height:16px;color:#444;">剪贴板</div>
<svg style="left:112px;top:146px" width="8" height="8" viewBox="0 0 8 8"><path d="M0.5 6V0.5H6M2.800 2.800l4.500 4.500M7.500 4.300v3.200H4.300" stroke="#666" stroke-width="1" fill="none"/></svg>
<div style="left:123px;top:68px;width:1px;height:86px;background:#c4c4c4"></div>
<div style="left:132px;top:75px;width:149px;height:23px;background:#fff;border:1px solid #c6c6c6"></div>
<div class="t" style="left:134.5px;top:79px;font-size:12px;line-height:16px;height:16px;color:#262626;">等线</div>
<svg style="left:263px;top:83px" width="14" height="8" viewBox="0 0 14 8"><path d="M0.5 0.5L7 7.3L13.5 0.5" stroke="#444" stroke-width="1.2" fill="none"/></svg>
<div style="left:281px;top:75px;width:48px;height:23px;background:#fff;border:1px solid #c6c6c6"></div>
<div class="t" style="left:284.5px;top:79px;font-size:12.5px;line-height:16px;height:16px;color:#262626;">11</div>
<svg style="left:311.5px;top:83px" width="14" height="8" viewBox="0 0 14 8"><path d="M0.5 0.5L7 7.3L13.5 0.5" stroke="#444" stroke-width="1.2" fill="none"/></svg>
<div class="t" style="left:335.5px;top:80px;font-size:13.5px;line-height:16px;height:16px;color:#555;">A</div>
<svg style="left:344px;top:78px" width="6" height="4" viewBox="0 0 6 4"><path d="M0 3.5L3 0l3 3.5z" fill="#3b73b9"/></svg>
<div class="t" style="left:358.5px;top:81px;font-size:10.5px;line-height:16px;height:16px;color:#555;">A</div>
<svg style="left:366px;top:78px" width="6" height="4" viewBox="0 0 6 4"><path d="M0 0h6L3 3.5z" fill="#3b73b9"/></svg>
<div class="t" style="left:138px;top:109.5px;font-size:13px;line-height:16px;height:16px;color:#444;font-weight:700;">B</div>
<div class="t" style="left:161.5px;top:109.5px;font-size:13.5px;line-height:16px;height:16px;color:#444;font-style:italic;font-family:'Liberation Serif',serif;">I</div>
<div class="t" style="left:181.5px;top:109.5px;font-size:13px;line-height:16px;height:16px;color:#444;text-decoration:underline;">U</div>
<svg style="left:201px;top:116px" width="5" height="3" viewBox="0 0 5 3"><path d="M0 0h5L2.5 3z" fill="#666"/></svg>
<div style="left:214px;top:106px;width:1px;height:22px;background:#c4c4c4"></div>
<svg style="left:222.5px;top:110.5px" width="14" height="14" viewBox="0 0 14 14"><path d="M1 1h12v12H1zM7 1v12M1 7h12" fill="none" stroke="#5a5a5a" stroke-width="1"/></svg>
<svg style="left:243.8px;top:116px" width="5" height="3" viewBox="0 0 5 3"><path d="M0 0h5L2.5 3z" fill="#666"/></svg>
<div style="left:257px;top:106px;width:1px;height:22px;background:#c4c4c4"></div>
<svg style="left:264px;top:107.5px" width="19" height="18" viewBox="0 0 19 18"><path d="M7 1l6.5 6-5 5.5L3 7.5z" fill="#fff" stroke="#666" stroke-width="1"/><path d="M13 6c2 1.5 3 3.2 1.8 4.5-1 .8-2.2 0-1.8-1.5z" fill="#3b73b9"/><path d="M6 0.5v4" stroke="#666" stroke-width="1"/><rect x="0" y="13" width="17.5" height="4.5" fill="#ffe800"/></svg>
<svg style="left:286.8px;top:116px" width="5" height="3" viewBox="0 0 5 3"><path d="M0 0h5L2.5 3z" fill="#666"/></svg>
<div class="t" style="left:301.5px;top:108px;font-size:13.5px;line-height:16px;height:16px;color:#555;font-weight:700;">A</div>
<div style="left:299px;top:120.5px;width:16px;height:4.500px;background:#ee1c0c"></div>
<svg style="left:320.7px;top:116px" width="5" height="3" viewBox="0 0 5 3"><path d="M0 0h5L2.5 3z" fill="#666"/></svg>
<div style="left:334px;top:106px;width:1px;height:22px;background:#c4c4c4"></div>
<div class="t" style="left:342.5px;top:103px;font-size:8.5px;line-height:16px;height:16px;color:#444;">wén</div>
<div class="t" style="left:346px;top:113.5px;font-size:9px;line-height:16px;height:16px;color:#3b73b9;font-weight:700;">文</div>
<svg style="left:363.9px;top:116px" width="5" height="3" viewBox="0 0 5 3"><path d="M0 0h5L2.5 3z" fill="#666"/></svg>
<div class="t" style="left:231px;top:140px;font-size:12px;line-height:16px;height:16px;color:#444;">字体</div>
<svg style="left:368.5px;top:146px" width="8" height="8" viewBox="0 0 8 8"><path d="M0.5 6V0.5H6M2.800 2.800l4.500 4.500M7.500 4.300v3.200H4.300" stroke="#666" stroke-width="1" fill="none"/></svg>
<div style="left:380px;top:68px;width:1px;height:86px;background:#c4c4c4"></div>
<div style="left:411px;top:75px;width:22px;height:23px;background:#c6c6c6"></div>
<div style="left:411px;top:105.5px;width:22px;height:23px;background:#c6c6c6"></div>
<svg style="left:393px;top:78px" width="14" height="10" viewBox="0 0 14 10"><path d="M0 0.5h14" stroke="#666" stroke-width="1"/><path d="M0 3.5h14" stroke="#666" stroke-width="1"/><path d="M0 6.5h14" stroke="#666" stroke-width="1"/></svg>
<svg style="left:415px;top:82px" width="14" height="10" viewBox="0 0 14 10"><path d="M0 0.5h14" stroke="#666" stroke-width="1"/><path d="M0 3.5h14" stroke="#666" stroke-width="1"/><path d="M0 6.5h14" stroke="#666" stroke-width="1"/></svg>
<svg style="left:437px;top:87px" width="14" height="10" viewBox="0 0 14 10"><path d="M0 0.5h14" stroke="#666" stroke-width="1"/><path d="M0 3.5h14" stroke="#666" stroke-width="1"/><path d="M0 6.5h14" stroke="#666" stroke-width="1"/></svg>
<div style="left:459px;top:76px;width:1px;height:21px;background:#c4c4c4"></div>
<svg style="left:466px;top:76px" width="19" height="19" viewBox="0 0 19 19"><path d="M6.500 17.500L16.500 7.500" stroke="#666" stroke-width="1.200"/><path d="M12.500 7h4.500v4.500" fill="none" stroke="#666" stroke-width="1.100"/><text x="0" y="0" font-size="11" fill="#555" transform="translate(5.500 13.500) rotate(-45)" font-family="Liberation Sans,sans-serif">ab</text></svg>
<svg style="left:486.8px;top:85px" width="5" height="3" viewBox="0 0 5 3"><path d="M0 0h5L2.5 3z" fill="#666"/></svg>
<svg style="left:393px;top:112px" width="14" height="13" viewBox="0 0 14 13"><path d="M0 0.5h14" stroke="#666" stroke-width="1"/><path d="M0 3.5h10" stroke="#666" stroke-width="1"/><path d="M0 6.5h14" stroke="#666" stroke-width="1"/><path d="M0 9.5h10" stroke="#666" stroke-width="1"/></svg>
<svg style="left:415px;top:112px" width="14" height="13" viewBox="0 0 14 13"><path d="M0 0.5h14" stroke="#666" stroke-width="1"/><path d="M2 3.5h10" stroke="#666" stroke-width="1"/><path d="M0 6.5h14" stroke="#666" stroke-width="1"/><path d="M2 9.5h10" stroke="#666" stroke-width="1"/></svg>
<svg style="left:437px;top:112px" width="14" height="13" viewBox="0 0 14 13"><path d="M0 0.5h14" stroke="#666" stroke-width="1"/><path d="M4 3.5h10" stroke="#666" stroke-width="1"/><path d="M0 6.5h14" stroke="#666" stroke-width="1"/><path d="M4 9.5h10" stroke="#666" stroke-width="1"/></svg>
<div style="left:459px;top:107px;width:1px;height:21px;background:#c4c4c4"></div>
<svg style="left:467px;top:109.5px" width="16" height="15" viewBox="0 0 16 15"><path d="M0 0.6h16" stroke="#666" stroke-width="1.1"/><path d="M8 3.9h8" stroke="#666" stroke-width="1.1"/><path d="M8 7.2h8" stroke="#666" stroke-width="1.1"/><path d="M8 10.5h8" stroke="#666" stroke-width="1.1"/><path d="M0 13.8h16" stroke="#666" stroke-width="1.1"/><path d="M6.5 7.2H1M3.5 4.5L.8 7.2l2.7 2.7" stroke="#3b73b9" stroke-width="1.4" fill="none"/></svg>
<svg style="left:489px;top:109.5px" width="16" height="15" viewBox="0 0 16 15"><path d="M0 0.6h16" stroke="#666" stroke-width="1.1"/><path d="M8 3.9h8" stroke="#666" stroke-width="1.1"/><path d="M8 7.2h8" stroke="#666" stroke-width="1.1"/><path d="M8 10.5h8" stroke="#666" stroke-width="1.1"/><path d="M0 13.8h16" stroke="#666" stroke-width="1.1"/><path d="M0.5 7.2H6M3.5 4.5l2.7 2.7-2.7 2.7" stroke="#3b73b9" stroke-width="1.4" fill="none"/></svg>
<div style="left:512px;top:74px;width:1px;height:54px;background:#c4c4c4"></div>
<div class="t" style="left:522px;top:74px;font-size:10.5px;line-height:16px;height:16px;color:#444;">ab</div>
<div class="t" style="left:522px;top:83px;font-size:10.5px;line-height:16px;height:16px;color:#444;">c</div>
<svg style="left:527px;top:87px" width="7" height="6" viewBox="0 0 7 6"><path d="M6.5 0v3.5H1M3 1.5L1 3.5l2 2" fill="none" stroke="#3b73b9" stroke-width="1"/></svg>
<div class="t" style="left:539px;top:79px;font-size:12px;line-height:16px;height:16px;color:#262626;">自动换行</div>
<svg style="left:520px;top:109px" width="15" height="15" viewBox="0 0 15 15"><path d="M0.500 0.500h14v14h-14zM0.500 4.500h14M0.500 10.500h14M7.500 .500V4.500M7.500 10.500v4" fill="none" stroke="#666" stroke-width="1"/><path d="M2.5 7.5h10M4.5 5.7L2.5 7.5l2 1.8M10.5 5.7l2 1.8-2 1.8" fill="none" stroke="#3b73b9" stroke-width="1"/></svg>
<div class="t" style="left:539px;top:110px;font-size:12px;line-height:16px;height:16px;color:#262626;">合并后居中</div>
<svg style="left:608.8px;top:116px" width="5" height="3" viewBox="0 0 5 3"><path d="M0 0h5L2.5 3z" fill="#666"/></svg>
<div class="t" style="left:470px;top:140px;font-size:12px;line-height:16px;height:16px;color:#444;">对齐方式</div>
<svg style="left:615px;top:146px" width="8" height="8" viewBox="0 0 8 8"><path d="M0.5 6V0.5H6M2.800 2.800l4.500 4.500M7.500 4.300v3.200H4.300" stroke="#666" stroke-width="1" fill="none"/></svg>
<div style="left:625.5px;top:68px;width:1px;height:86px;background:#c4c4c4"></div>
<div style="left:635px;top:75px;width:131px;height:23px;background:#fff;border:1px solid #c6c6c6"></div>
<div class="t" style="left:638px;top:79px;font-size:12px;line-height:16px;height:16px;color:#262626;">常规</div>
<svg style="left:748.5px;top:83px" width="14" height="8" viewBox="0 0 14 8"><path d="M0.5 0.5L7 7.3L13.5 0.5" stroke="#444" stroke-width="1.2" fill="none"/></svg>
<svg style="left:637px;top:108.5px" width="18" height="18" viewBox="0 0 18 18"><rect x="1" y="1" width="14.500" height="8.500" fill="#fff" stroke="#3b73b9" stroke-width="2"/><circle cx="8.200" cy="5.200" r="2.200" fill="#3b73b9"/><ellipse cx="12.5" cy="9.5" rx="4" ry="1.6" fill="#f0c070" stroke="#fff" stroke-width=".6"/><ellipse cx="12.5" cy="12" rx="4" ry="1.6" fill="#f0c070" stroke="#fff" stroke-width=".6"/><ellipse cx="8.5" cy="14.5" rx="4" ry="1.6" fill="#f0c070" stroke="#fff" stroke-width=".6"/></svg>
<svg style="left:659.5px;top:116px" width="5" height="3" viewBox="0 0 5 3"><path d="M0 0h5L2.5 3z" fill="#666"/></svg>
<div class="t" style="left:673.5px;top:110px;font-size:15px;line-height:16px;height:16px;color:#555;">%</div>
<div class="t" style="left:698.5px;top:105.5px;font-size:18px;line-height:16px;height:16px;color:#555;font-weight:700;font-family:'Liberation Serif',serif;">,</div>
<div style="left:717px;top:107px;width:1px;height:21px;background:#c4c4c4"></div>
<div class="t" style="left:730px;top:106px;font-size:8.5px;line-height:16px;height:16px;color:#444;">.0</div>
<div class="t" style="left:726.5px;top:114px;font-size:8.5px;line-height:16px;height:16px;color:#444;">.00</div>
<svg style="left:725px;top:111px" width="6" height="5" viewBox="0 0 6 5"><path d="M6 2.5H.8M2.8.5l-2 2 2 2" fill="none" stroke="#3b73b9" stroke-width="1.1"/></svg>
<div class="t" style="left:749.5px;top:106px;font-size:8.5px;line-height:16px;height:16px;color:#444;">.00</div>
<div class="t" style="left:755.5px;top:114px;font-size:8.5px;line-height:16px;height:16px;color:#444;">.0</div>
<svg style="left:747.5px;top:119px" width="6" height="5" viewBox="0 0 6 5"><path d="M0 2.5h5.2M3.2.5l2 2-2 2" fill="none" stroke="#3b73b9" stroke-width="1.1"/></svg>
<div class="t" style="left:679.5px;top:140px;font-size:12px;line-height:16px;height:16px;color:#444;">数字</div>
<svg style="left:762px;top:146px" width="8" height="8" viewBox="0 0 8 8"><path d="M0.5 6V0.5H6M2.800 2.800l4.500 4.500M7.500 4.300v3.200H4.300" stroke="#666" stroke-width="1" fill="none"/></svg>
<div style="left:773px;top:68px;width:1px;height:86px;background:#c4c4c4"></div>
<svg style="left:793.5px;top:71.5px" width="31" height="31" viewBox="0 0 31 31"><rect x="0.5" y="0.5" width="27" height="23" fill="#fff" stroke="#7a7a7a" stroke-width="1"/><path d="M7 .5v23" stroke="#9a9a9a" stroke-width=".8"/><path d="M14 .5v23" stroke="#9a9a9a" stroke-width=".8"/><path d="M21 .5v23" stroke="#9a9a9a" stroke-width=".8"/><path d="M.5 6.2h27" stroke="#9a9a9a" stroke-width=".8"/><path d="M.5 12h27" stroke="#9a9a9a" stroke-width=".8"/><path d="M.5 17.8h27" stroke="#9a9a9a" stroke-width=".8"/><rect x="7.5" y="1" width="6" height="5" fill="#e8673a"/><rect x="7.5" y="6.7" width="11" height="5" fill="#3b73b9"/><rect x="7.5" y="12.5" width="8" height="5" fill="#e8673a"/><rect x="7.5" y="18.3" width="4.5" height="5" fill="#3b73b9"/><rect x="14.5" y="17.5" width="15" height="12" fill="#fff" stroke="#6a6a6a" stroke-width="1"/><path d="M18 22h8M18 25h8M24.5 20l-5 7" stroke="#333" stroke-width="1"/></svg>
<div class="t" style="left:784px;top:104.5px;font-size:12px;line-height:16px;height:16px;color:#262626;">条件格式</div>
<svg style="left:807.5px;top:125px" width="5" height="3" viewBox="0 0 5 3"><path d="M0 0h5L2.5 3z" fill="#666"/></svg>
<svg style="left:853px;top:73.5px" width="30" height="29" viewBox="0 0 30 29"><rect x="0.5" y="0.5" width="24" height="20" fill="#fff" stroke="#7a7a7a" stroke-width="1"/><rect x="7" y="6" width="17.5" height="14.5" fill="#c5d5ea"/><path d="M6.5 .5v20" stroke="#9a9a9a" stroke-width=".8"/><path d="M12.5 .5v20" stroke="#9a9a9a" stroke-width=".8"/><path d="M18.5 .5v20" stroke="#9a9a9a" stroke-width=".8"/><path d="M.5 5.5h24" stroke="#9a9a9a" stroke-width=".8"/><path d="M.5 10.5h24" stroke="#9a9a9a" stroke-width=".8"/><path d="M.5 15.5h24" stroke="#9a9a9a" stroke-width=".8"/><path d="M19.500 17.500l8-12 2.500 1.600-7 12.400z" fill="#6e6e6e"/><path d="M7 28.500c3.500-1.500 5.500-4.500 7.500-8.500 3-2.500 7.500-.500 6.500 3.500-1.500 4-8 6-14 5z" fill="#3b73b9"/><ellipse cx="17" cy="22.500" rx="2.300" ry="1.400" fill="#fff" transform="rotate(-30 17 22.500)"/></svg>
<div class="t" style="left:854px;top:104.5px;font-size:12px;line-height:16px;height:16px;color:#262626;">套用</div>
<div class="t" style="left:836.5px;top:118.5px;font-size:12px;line-height:16px;height:16px;color:#262626;">表格格式</div>
<svg style="left:889.5px;top:125px" width="5" height="3" viewBox="0 0 5 3"><path d="M0 0h5L2.5 3z" fill="#666"/></svg>
<div style="left:898px;top:70px;width:549px;height:62px;background:#fff;border:1px solid #d0d0d0"></div>
<div style="left:899px;top:73px;width:105px;height:28px;background:#fff;border:3px solid #c6c6c6"></div>
<div class="t" style="left:907px;top:78.5px;font-size:14.67px;line-height:16px;height:16px;color:#222;">常规</div>
<div style="left:902px;top:104px;width:100px;height:22px;background:#f2f2f2;border:1px solid #7f7f7f"></div>
<div class="t" style="left:906px;top:106px;font-size:14.67px;line-height:16px;height:16px;color:#fa7d00;font-weight:500;">计算</div>
<div style="left:1008px;top:76px;width:100px;height:22px;background:#ffc7ce"></div>
<div class="t" style="left:1013px;top:78.5px;font-size:14.67px;line-height:16px;height:16px;color:#9c0006;">差</div>
<div style="left:1008px;top:104px;width:100px;height:22px;background:#a5a5a5;border:3px double #3f3f3f"></div>
<div class="t" style="left:1012px;top:106px;font-size:14.67px;line-height:16px;height:16px;color:#fff;font-weight:500;letter-spacing:0.3px;">检查单元格</div>
<div style="left:1114px;top:76px;width:100px;height:22px;background:#c6efce"></div>
<div class="t" style="left:1118.5px;top:78.5px;font-size:14.67px;line-height:16px;height:16px;color:#006100;">好</div>
<div class="t" style="left:1118.5px;top:106px;font-size:14.67px;line-height:16px;height:16px;color:#7f7f7f;font-style:italic;font-weight:300;">解释性文本</div>
<div style="left:1220px;top:76px;width:100px;height:22px;background:#ffeb9c"></div>
<div class="t" style="left:1225px;top:78.5px;font-size:14.67px;line-height:16px;height:16px;color:#9c5700;">适中</div>
<div class="t" style="left:1225px;top:106px;font-size:14.67px;line-height:16px;height:16px;color:#ee2200;font-weight:300;">警告文本</div>
<div class="t" style="left:1330.5px;top:78px;font-size:14.67px;line-height:16px;height:16px;color:#0563c1;text-decoration:underline;font-weight:300;">超链接</div>
<div class="t" style="left:1330.5px;top:106px;font-size:14.67px;line-height:16px;height:16px;color:#fa7d00;font-weight:300;">链接单元格</div>
<div style="left:1326px;top:123px;width:100px;height:3px;border-top:1px solid #ff8001;border-bottom:1px solid #ff8001"></div>
<div style="left:1430px;top:70px;width:17px;height:21px;background:#fff;border:1px solid #d6d6d6"></div>
<div style="left:1430px;top:91px;width:17px;height:19px;background:#fff;border:1px solid #ababab"></div>
<div style="left:1430px;top:110px;width:17px;height:22px;background:#fff;border:1px solid #ababab"></div>
<svg style="transform:scaleY(-1);left:1432px;top:76px" width="13" height="7" viewBox="0 0 13 7"><path d="M0.5 0.5L6.5 6.3L12.5 0.5" stroke="#c4c4c4" stroke-width="1.2" fill="none"/></svg>
<svg style="left:1432px;top:97.5px" width="13" height="7" viewBox="0 0 13 7"><path d="M0.5 0.5L6.5 6.3L12.5 0.5" stroke="#555" stroke-width="1.2" fill="none"/></svg>
<div style="left:1432px;top:114px;width:13px;height:1px;background:#555"></div>
<svg style="left:1432px;top:119px" width="13" height="7" viewBox="0 0 13 7"><path d="M0.5 0.5L6.5 6.3L12.5 0.5" stroke="#555" stroke-width="1.2" fill="none"/></svg>
<div class="t" style="left:1103px;top:140px;font-size:12px;line-height:16px;height:16px;color:#444;">样式</div>
<div style="left:1457px;top:68px;width:1px;height:86px;background:#c4c4c4"></div>
<svg style="left:1474px;top:72px" width="27" height="27" viewBox="0 0 27 27"><rect x="0.5" y="0.5" width="14" height="4.5" fill="#fff" stroke="#777" stroke-width="1"/><path d="M7.5 .5v4.500" stroke="#777"/><rect x="11.5" y="8.500" width="14" height="4.5" fill="#c5d5ea" stroke="#777" stroke-width="1"/><path d="M18.5 8.500v4.500" stroke="#777"/><path d="M8 10.700H1.500M4.500 7.500L1.300 10.700l3.200 3.200" stroke="#3b73b9" stroke-width="1.600" fill="none"/><rect x="0.5" y="16.500" width="14" height="9.500" fill="#fff" stroke="#777" stroke-width="1"/><path d="M7.500 16.500v9.500M.5 21.200h14" stroke="#777"/></svg>
<div class="t" style="left:1474.5px;top:104px;font-size:12px;line-height:16px;height:16px;color:#262626;">插入</div>
<svg style="left:1486px;top:125px" width="5" height="3" viewBox="0 0 5 3"><path d="M0 0h5L2.5 3z" fill="#666"/></svg>
<svg style="left:1515px;top:72px" width="27" height="27" viewBox="0 0 27 27"><rect x="0.5" y="0.5" width="14" height="4.5" fill="#fff" stroke="#777" stroke-width="1"/><path d="M7.500 .5v4.500" stroke="#777"/><rect x="6.500" y="8.500" width="14" height="4.500" fill="#c5d5ea" stroke="#777" stroke-width="1"/><path d="M15 6l5 9M20 6l-5 9" stroke="#e8673a" stroke-width="1.600"/><rect x="0.5" y="16.500" width="14" height="9.500" fill="#fff" stroke="#777" stroke-width="1"/><path d="M7.500 16.500v9.500M.5 21.200h14" stroke="#777"/></svg>
<div class="t" style="left:1516.5px;top:104px;font-size:12px;line-height:16px;height:16px;color:#262626;">删除</div>
<svg style="left:1527.5px;top:125px" width="5" height="3" viewBox="0 0 5 3"><path d="M0 0h5L2.5 3z" fill="#666"/></svg>
<div class="t" style="left:1510.5px;top:140px;font-size:12px;line-height:16px;height:16px;color:#444;">单元格</div>
<div style="left:1533px;top:0;width:1px;height:946px;background:#111"></div>
<div style="left:0;top:945px;width:1534px;height:1px;background:#111"></div>
</body></html>
